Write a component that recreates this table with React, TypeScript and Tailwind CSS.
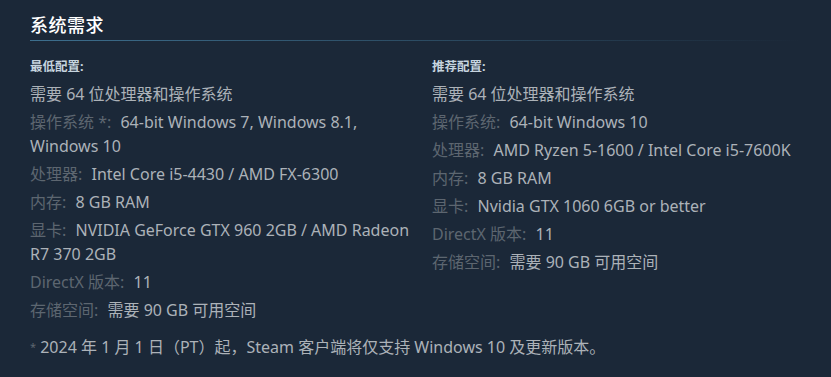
import React from "react";

const font = { fontFamily: '"Noto Sans", "Noto Sans CJK SC", Arial, sans-serif' };

type Row = { label?: string; value: string };

function Col({ heading, rows, className }: { heading: string; rows: Row[]; className?: string }) {
  return (
    <div className={className}>
      <div className="text-[12.5px] font-bold leading-[16px] text-[#c6d4df] mb-[7px]">{heading}</div>
      <ul>
        {rows.map((r, i) => (
          <li key={i} className="text-[16px] leading-[24px] mb-[4px] text-[#acb2b8]">
            {r.label && <span className="text-[#5d6670] mr-[5px]">{r.label}</span>}
            {r.label ? " " : ""}
            {r.value}
          </li>
        ))}
      </ul>
    </div>
  );
}

export default function App() {
  const left: Row[] = [
    { value: "需要 64 位处理器和操作系统" },
    { label: "操作系统 *:", value: "64-bit Windows 7, Windows 8.1, Windows 10" },
    { label: "处理器:", value: "Intel Core i5-4430 / AMD FX-6300" },
    { label: "内存:", value: "8 GB RAM" },
    { label: "显卡:", value: "NVIDIA GeForce GTX 960 2GB / AMD Radeon R7 370 2GB" },
    { label: "DirectX 版本:", value: "11" },
    { label: "存储空间:", value: "需要 90 GB 可用空间" },
  ];
  const right: Row[] = [
    { value: "需要 64 位处理器和操作系统" },
    { label: "操作系统:", value: "64-bit Windows 10" },
    { label: "处理器:", value: "AMD Ryzen 5-1600 / Intel Core i5-7600K" },
    { label: "内存:", value: "8 GB RAM" },
    { label: "显卡:", value: "Nvidia GTX 1060 6GB or better" },
    { label: "DirectX 版本:", value: "11" },
    { label: "存储空间:", value: "需要 90 GB 可用空间" },
  ];
  return (
    <div className="w-[831px] h-[377px] bg-[#1b2838] overflow-hidden" style={font}>
      <div className="pl-[30px] pr-[30px] pt-[14px]">
        <div className="text-[18px] leading-[22px] tracking-[0.5px] font-medium text-[#ffffff] pb-[4px]">系统需求</div>
        <div className="h-px bg-gradient-to-r from-[#3d6f8e] via-[#2c4c63] to-[#1b2838]" />
        <div className="flex pt-[18px]">
          <Col heading="最低配置:" rows={left} className="w-[402px] pr-[10px] shrink-0" />
          <Col heading="推荐配置:" rows={right} className="flex-1" />
        </div>
        <div className="text-[16px] leading-[24px] text-[#acb2b8] mt-[9px]">
          <span className="text-[#5d6670] text-[11px] align-top">*</span> 2024 年 1 月 1 日（PT）起，Steam 客户端将仅支持 Windows 10 及更新版本。
        </div>
      </div>
    </div>
  );
}
